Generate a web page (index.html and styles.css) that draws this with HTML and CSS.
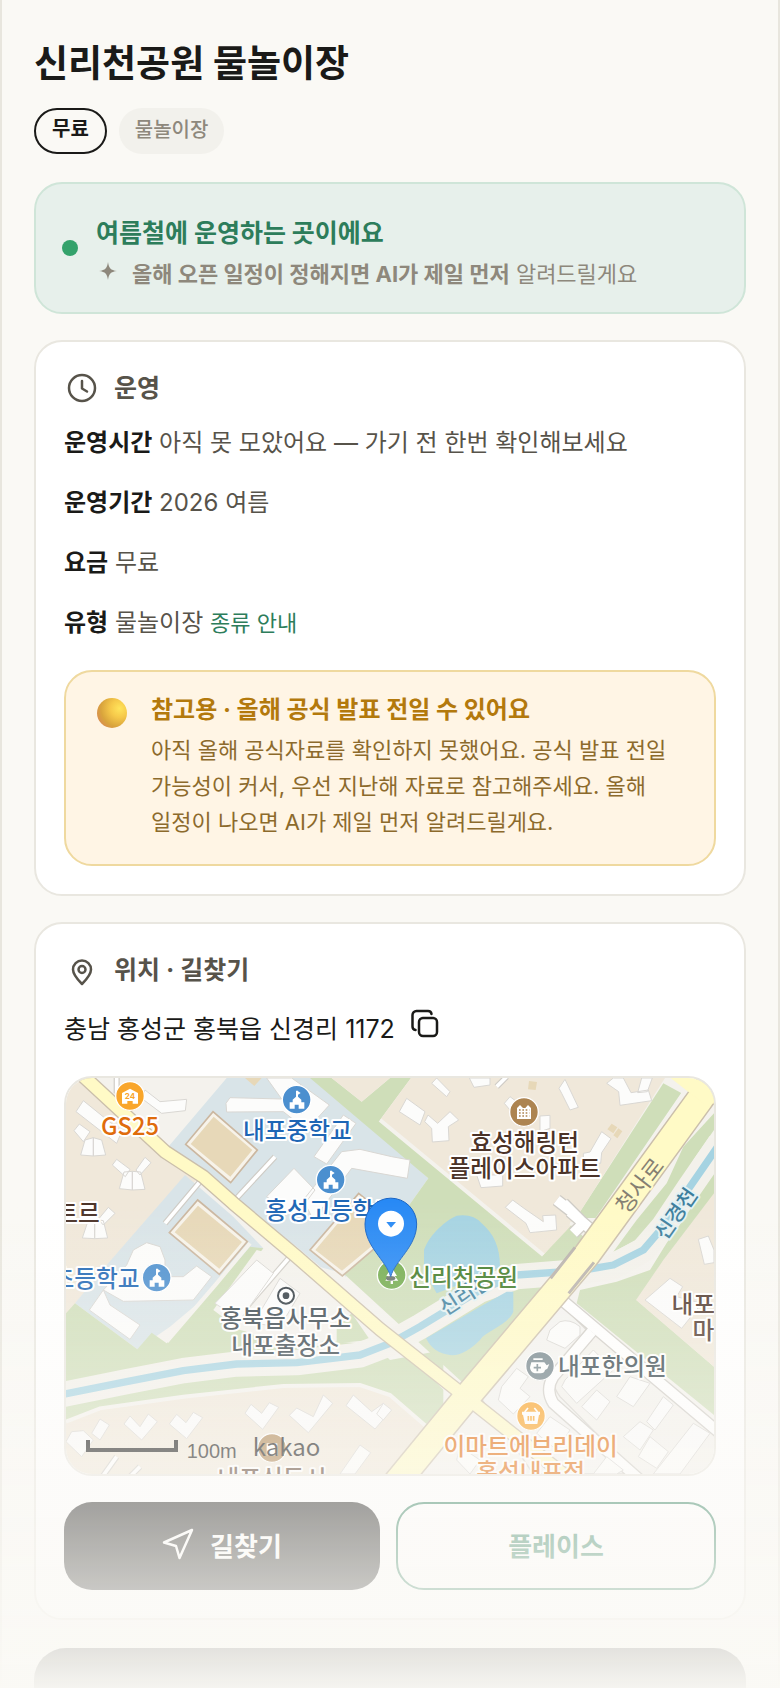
FILE: index.html
```html
<!DOCTYPE html>
<html lang="ko">
<head>
<meta charset="utf-8">
<meta name="viewport" content="width=device-width, initial-scale=1">
<title>신리천공원 물놀이장</title>
<link rel="stylesheet" href="styles.css">
</head>
<body>
<main class="page">
  <header class="place-head">
    <h1 class="place-title">신리천공원 물놀이장</h1>
    <div class="tags">
      <span class="tag tag-free">무료</span>
      <span class="tag tag-kind">물놀이장</span>
    </div>
  </header>

  <section class="status">
    <span class="status-dot"></span>
    <div class="status-body">
      <h2 class="status-title">여름철에 운영하는 곳이에요</h2>
      <p class="status-note">
        <svg class="spark" viewBox="0 0 24 24" aria-hidden="true"><path d="M12 3c.8 6 2.600 8.200 9 9-6.400.8-8.200 3-9 9-.8-6-2.600-8.200-9-9 6.400-.8 8.200-3 9-9z"/></svg>
        <span><b>올해 오픈 일정이 정해지면 AI가 제일 먼저</b> 알려드릴게요</span>
      </p>
    </div>
  </section>

  <section class="card">
    <h2 class="card-title">
      <svg class="icon" viewBox="0 0 36 36" aria-hidden="true"><circle cx="18" cy="18" r="13"/><path d="M18 11v7.500l5 3"/></svg>
      운영
    </h2>
    <div class="facts">
      <p class="fact"><b>운영시간</b> 아직 못 모았어요 — 가기 전 한번 확인해보세요</p>
      <p class="fact"><b>운영기간</b> 2026 여름</p>
      <p class="fact"><b>요금</b> 무료</p>
      <p class="fact"><b>유형</b> 물놀이장 <a class="kind-link" href="#kinds">종류 안내</a></p>
    </div>
    <aside class="notice">
      <span class="ball"></span>
      <div class="notice-body">
        <h3 class="notice-title">참고용 · 올해 공식 발표 전일 수 있어요</h3>
        <p class="notice-text">아직 올해 공식자료를 확인하지 못했어요. 공식 발표 전일 가능성이 커서, 우선 지난해 자료로 참고해주세요. 올해 일정이 나오면 AI가 제일 먼저 알려드릴게요.</p>
      </div>
    </aside>
  </section>

  <section class="card card-place">
    <h2 class="card-title">
      <svg class="icon" viewBox="0 0 36 36" aria-hidden="true"><path d="M18 32C12 26 9 22 9 17.500a9 9 0 0 1 18 0C27 22 24 26 18 32z"/><circle cx="18" cy="17.500" r="3.500"/></svg>
      위치 · 길찾기
    </h2>
    <div class="address">
      <span>충남 홍성군 홍북읍 신경리 1172</span>
      <button class="copy" type="button" aria-label="주소 복사">
        <svg viewBox="0 0 32 32" aria-hidden="true"><rect x="10" y="10" width="18" height="18" rx="4"/><path d="M6.500 22A3.500 3.500 0 0 1 3.500 18.500V7a4 4 0 0 1 4-4h11.500a3.500 3.500 0 0 1 3.500 3"/></svg>
      </button>
    </div>

    <svg class="map" viewBox="48 54 1944 1188" preserveAspectRatio="xMidYMid slice" role="img" aria-label="신리천공원 주변 지도">
      <rect class="ground" x="0" y="0" width="2100" height="1300"/>
      <g class="beige">
        <path d="M48 54H90L350 290 440 360 170 615 48 765z"/>
      </g>
      <g class="school">
        <path d="M530 54H790L1020 250 1135 355 1060 460 870 670 740 560 550 420 450 350 355 260z"/>
        <path d="M405 345L170 615 75 730 262 868 360 800 640 565 550 470z"/>
      </g>
      <g class="green">
        <path d="M780 54H845L935 125 1020 54H1083L990 180 1480 585 1560 490 1610 540 1480 700 1240 970 880 640 1060 460 1135 355z"/>
        <path d="M48 760L75 730 262 868 305 818 350 850 600 560 640 565 500 750 560 800 660 850 800 860 860 800 960 840 1020 900 1180 870 1180 1100 48 1100z"/>
        <path d="M1840 70L1895 100 1640 475 1600 475 1590 455z"/>
        <path d="M1992 160L1992 210 1930 300 1860 430 1780 530 1690 575 1760 480 1850 370 1900 260z"/>
        <path d="M1992 340L1992 470 1760 720 1992 920V1065L1580 730 1590 690 1700 665 1800 630 1880 500z"/>
        <path d="M240 1010L660 950 990 930 930 1100 100 1100z"/>
      </g>
      <g class="beige">
        <path d="M845 54H1020L935 125z"/>
        <path d="M1083 54H1845L1600 440 1560 500 1480 585 990 180z"/>
        <path d="M1992 400V920L1758 720 1840 600z"/>
        <path d="M48 1085L150 1045 400 1010 700 978 930 975 1020 1005 1130 1100 1180 1100 1040 1242H48z"/>
      </g>
      <path class="ground" d="M880 640L620 570 490 750 570 810 650 830 930 850 1000 830z"/>
      <path class="green" d="M860 800L905 760 960 840 860 850z"/>
      <path class="verge" d="M48 1085L150 1045 400 1010 700 978 930 975 1020 1005 1130 1100"/>
      <path class="verge" d="M350 845L500 670 600 550M1480 585L990 180M1160 960L1210 1010 1130 1100"/>
      <path class="verge" d="M1640 520L1600 500 1560 490M1900 100L1640 480H1590"/>

      <path class="bank" d="M30 1005L230 965 400 932 560 912 740 908 930 885 1020 850 1110 800 1290 690 1400 650 1590 635 1690 620 1780 570 1840 500 1920 380 2010 250"/>
      <path class="pond" d="M1122 630V570C1140 520 1190 480 1220 467Q1270 460 1295 490C1330 520 1350 560 1350 620L1290 650 1160 700z"/>
      <path class="pond" d="M1128 835L1290 740 1370 695H1390V755C1370 800 1310 810 1290 840Q1240 890 1200 885 1150 880 1128 835z"/>
      <path class="stream" d="M30 1005L230 965 400 932 560 912 740 908 930 885 1020 850 1110 800 1290 690 1400 645 1590 632 1690 615 1780 570 1840 500 1920 380 2010 250"/>

      <g class="block">
        <path d="M1515 740Q1530 735 1545 745L1610 810 1540 910Q1490 960 1530 1010L1760 1242H1450L1290 1010z"/>
      </g>
      <path class="street-edge" d="M1530 715L2010 1120M1625 815L1510 950Q1485 990 1510 1030L1770 1260M1540 430L1600 490 1570 520M1520 420L1565 455M1560 455L1630 515"/>
      <path class="street" d="M1530 715L2010 1120M1625 815L1510 950Q1485 990 1510 1030L1770 1260M1540 430L1600 490 1570 520M1520 420L1565 455M1560 455L1630 515"/>
      <path class="lane-edge" d="M200 40V100M675 290L550 425M450 365L345 490M720 590L590 740M1340 80L1370 50M200 1190L150 1260M270 1220L230 1260"/>
      <path class="lane" d="M200 40V100M675 290L550 425M450 365L345 490M720 590L590 740M1340 80L1370 50M200 1190L150 1260M270 1220L230 1260"/>

      <path class="road-edge minor" d="M80 30L345 275 460 350 550 430 740 590 990 808 1240 1005 1600 1290"/>
      <path class="road-edge major" d="M2010 30L1947 122 1610 585 1260 1000 1030 1280"/>
      <path class="road minor" d="M80 30L345 275 460 350 550 430 740 590 990 808 1240 1005 1600 1290"/>
      <path class="road major" d="M2010 30L1947 122 1610 585 1260 1000 1030 1280"/>
      <path class="road" d="M1845 40H2000V130L1960 130 1915 95z"/>
      <path class="bridge" d="M1575 562L1502 655M1632 607L1556 700"/>

      <g class="field">
        <path class="field-edge" d="M489 155L622 270 542 368 407 253z"/><path d="M491 170L607 270 541 350 422 252z"/>
        <path class="field-edge" d="M443 420L592 545 508 643 358 518z"/><path d="M444 437L576 546 508 626 374 517z"/>
        <path class="field-edge" d="M926 400L1050 500 877 648 780 570z"/><path d="M926 416L1035 500 876 632 796 570z"/>
        <path d="M585 54H635L613 78zM1437 63L1461 66 1457 90 1434 88zM1685 191L1702 202 1690 220 1672 208zM1705 205L1717 214 1702 235 1690 226z"/>
      </g>

      <g class="building">
        <path d="M100 122L215 215 200 250 78 155zM285 90L330 125 410 118 406 152 335 160 275 115zM88 192L120 215 100 245 72 212z"/>
        <path d="M105 240L130 233V288L92 285zM130 233L155 240 167 285 130 288zM200 298L240 328 226 350 187 315zM285 292L303 308 270 345 258 330zM222 336L247 334V390L208 386zM247 334L272 336 285 388 247 390z"/>
        <path d="M175 442L195 460 160 495 145 478zM115 480L134 478V536L97 534zM134 478L160 482 173 534 134 536z"/>
        <path d="M540 113L695 117 650 54H725L838 135 770 210 700 155 530 156 528 130zM880 165L918 190 830 312 792 290zM732 325L795 390 735 470 650 410zM875 275L930 268 1025 290 1080 300 1072 355 905 325 790 480 760 420z"/>
        <path d="M230 615L250 570 290 548 330 560 345 600V650H400L440 618 485 650 430 720 220 724 160 690zM160 690L180 735 270 795 240 838 118 750z"/>
        <path d="M620 600L670 640 570 780 495 730zM690 655L750 700 690 800 610 790z"/>
        <path d="M1160 54L1200 95 1190 110 1145 70zM1070 115L1125 155 1110 195 1048 155zM1134 165L1163 190 1200 155 1226 180 1195 200 1197 242 1147 246 1145 205 1124 185zM1258 54H1320V75L1272 82zM1380 110L1400 125 1380 150 1363 130zM1545 58L1585 142 1560 150 1535 100 1527 85z"/>
        <path d="M1690 54L1720 54 1743 98 1795 90 1805 122 1710 136 1706 95 1670 70zM1775 54H1807L1792 95 1763 98z"/>
        <path d="M1470 168L1500 166V205L1470 215zM1655 215L1683 236 1655 278 1652 310 1600 305V280L1620 276zM1280 345L1358 345V378L1293 383z"/>
        <path d="M1388 420L1422 445 1480 485 1478 467 1517 465 1520 510 1440 518 1428 490 1366 442zM1945 538L1975 528 1992 570V608L1963 613z"/>
        <path d="M1860 655L1898 680 1880 710 1955 730 1895 805 1785 720z"/>
        <path d="M100 1112L130 1140 95 1190 48 1145 65 1115zM150 1077L178 1095 150 1140 125 1120zM240 1068L270 1100 295 1062 322 1085 275 1140 222 1092zM380 1063L408 1088 430 1057 458 1073 410 1136 358 1092zM603 1033L635 1060 658 1028 686 1042 638 1108 585 1060zM740 1044L790 1070 820 1005 848 1030 775 1118 718 1066zM910 1005L965 1055 1000 1030 1020 1055 975 1107 888 1037zM930 1155L962 1178 915 1242H870z"/>
        <path d="M1000 1030L1025 1050 1000 1080 980 1062zM1230 1160L1290 1200 1260 1242 1220 1200z"/>
        <path d="M1500 810L1530 785Q1560 775 1590 800V825L1545 865 1490 840zM1400 925L1435 950 1410 985 1440 1010 1390 1062 1345 1020 1355 980zM1545 960L1630 870 1690 930 1580 1030 1535 980zM1640 990L1680 1025 1640 1080 1595 1040zM1740 950L1800 970 1750 1040 1700 1010zM1790 1085L1840 1010 1870 1035 1815 1110zM1930 1090L1980 1120 1890 1242H1810zM1800 1130L1855 1175 1820 1225 1765 1190zM1770 1085L1810 1110 1770 1170 1720 1130zM1500 1070L1560 1110 1520 1170 1460 1120zM1670 1190L1720 1230 1700 1242H1630z"/>
      </g>

      <g class="poi">
        <circle cx="240" cy="108" r="43" fill="#f9a62b"/>
        <circle cx="740" cy="119" r="43" fill="#4b8fcf"/>
        <circle cx="842" cy="359" r="43" fill="#4b8fcf"/>
        <circle cx="320" cy="653" r="43" fill="#4b8fcf"/>
        <circle cx="1422" cy="156" r="43" fill="#ad8450"/>
        <circle cx="1025" cy="645" r="43" fill="#73ac4e"/>
        <circle cx="1470" cy="918" r="43" fill="#6f8088"/>
        <circle cx="1443" cy="1068" r="43" fill="#faa020"/>
        <circle cx="666" cy="1164" r="43" fill="#ad8450"/>
      </g>
      <g class="glyph">
        <path d="M216 99L240 86 264 99V131H248V123H232V131H216z"/>
        <path id="school-mark" d="M738 92V110L728 119V127H719V146H734V134H746V146H763V127H754V119L744 110V104L752 99 744 94V92z"/>
        <use href="#school-mark" x="102" y="240"/>
        <use href="#school-mark" x="-420" y="534"/>
        <path d="M1401 144L1410 135 1419 144 1426 144 1434 135 1443 144V177H1401z"/>
        <path d="M1450 895H1478V900H1450zM1444 907H1483L1490 916 1498 912 1492 926 1485 930Q1483 940 1472 940H1454Q1440 936 1440 922z"/>
        <path d="M1416 1055H1470V1064H1467L1462 1092H1425L1419 1064H1416z"/>
        <path d="M1025 622L1041 648H1034L1045 662H1029V672H1022V662H1006L1016 648H1009z"/>
        <path d="M650 1150H682V1186H650z"/>
      </g>
      <path class="basket" d="M1424 1056L1434 1044M1463 1056L1453 1044"/>
      <path class="detail" stroke="#ad8450" d="M1407 150H1438M1407 159H1438M1407 168H1438" stroke-dasharray="5 5"/>
      <path class="detail" stroke="#6f8088" d="M1462 912V934M1451 923H1473"/>
      <path class="detail" stroke="#faa020" d="M1435 1068V1082M1443 1068V1082M1451 1068V1082"/>
      <text class="tiny" x="240" y="117">24</text>
      <circle class="office-ring" cx="708" cy="707" r="24"/><circle cx="708" cy="707" r="10" fill="#2f3940"/>

      <g class="label">
        <text x="240" y="226" fill="#df6c0c">GS25</text>
        <text x="742" y="238" fill="#1d66b5">내포중학교</text>
        <text x="842" y="477" fill="#1d66b5">홍성고등학교</text>
        <text x="138" y="682" fill="#1d66b5">초등학교</text>
        <text x="84" y="487" fill="#4b3328">트르</text>
        <text x="1424" y="273" fill="#4b3328">효성해링턴</text>
        <text x="1424" y="352" fill="#4b3328">플레이스아파트</text>
        <text x="707" y="802" fill="#36434b">홍북읍사무소</text>
        <text x="707" y="882" fill="#36434b">내포출장소</text>
        <text x="1687" y="944" fill="#2f3f47">내포한의원</text>
        <text x="1442" y="1185" fill="#e06703">이마트에브리데이</text>
        <text x="1442" y="1264" fill="#e06703">홍성내포점</text>
        <text x="666" y="1280" fill="#563b29">내포신도시</text>
        <text x="1930" y="758" fill="#4b3328">내포</text>
        <text x="1960" y="838" fill="#4b3328">마</text>
        <text class="on-road" transform="translate(1788 392) rotate(-52)" fill="#857f72">청사로</text>
        <text class="on-water" transform="translate(1896 474) rotate(-55)" fill="#3c7e9d">신경천</text>
        <text class="on-water" transform="translate(1258 722) rotate(-33)" fill="#3c7e9d">신리천</text>
        <text x="1241" y="677" fill="#3f7b28">신리천공원</text>
      </g>

      <ellipse cx="1022" cy="655" rx="14" ry="7" fill="#66706a"/>
      <path class="pin" d="M1022 650C1008 600 945 560 945 492A77 77 0 0 1 1100 492C1100 560 1036 600 1022 650z"/>
      <circle cx="1023" cy="491" r="39" fill="#fff"/>
      <path d="M1009 486H1038L1023 503z" fill="#2789f5"/>

      <path class="scale" d="M114 1140V1170H378V1140"/>
      <text class="scale-text" x="410" y="1193">100m</text>
      <text class="brand" x="608" y="1187">kakao</text>
    </svg>

    <div class="actions">
      <button class="btn btn-go" type="button">
        <svg class="go-icon" viewBox="0 0 32 32" aria-hidden="true"><path d="M30 2L2 14.500l12 3.500L17.500 30z"/></svg>
        길찾기
      </button>
      <button class="btn btn-place" type="button">플레이스</button>
    </div>
  </section>

  <section class="next-card"></section>
  <div class="fade"></div>
</main>
</body>
</html>
```
FILE: styles.css
```css
* { box-sizing: border-box; }

body {
  margin: 0;
  background: #faf9f5;
  color: #1a1a18;
  font-family: Inter, "Noto Sans CJK KR", sans-serif;
  font-size: 25px;
  word-break: keep-all;
}

h1, h2, h3, p { margin: 0; }
b { font-weight: 700; }
button { font: inherit; cursor: pointer; }

.page {
  display: flex;
  flex-direction: column;
  min-height: 100vh;
  padding: 38px 32px 0;
  border: solid #e8e6de;
  border-width: 0 2px;
}

.place-title {
  font-size: 37px;
  font-weight: 700;
  line-height: 52px;
}

.tags {
  display: flex;
  gap: 12px;
  margin: 18px 0 28px;
}

.tag {
  padding: 5px 16px 7px;
  border-radius: 24px;
  font-size: 20px;
  font-weight: 500;
  line-height: 34px;
}

.tag-free {
  padding: 3px 16px 7px;
  border: 2px solid #1a1a18;
  font-weight: 600;
  line-height: 32px;
}

.tag-kind { background: #f2f1ec; color: #8e887c; }

.status {
  display: flex;
  align-items: center;
  gap: 18px;
  padding: 0 26px;
  margin-bottom: 26px;
  border: 2px solid #cfe5d8;
  border-radius: 28px;
  background: #e7f0eb;
}

.status-dot {
  flex: none;
  width: 16px;
  height: 16px;
  border-radius: 50%;
  background: #34a26b;
}

.status-body { padding: 30px 0 20px; }

.status-title {
  margin-bottom: 4px;
  color: #2d7d5b;
  font-size: 25px;
  font-weight: 700;
  line-height: 38px;
}

.status-note {
  display: flex;
  gap: 12px;
  color: #8e887c;
  font-size: 22px;
  line-height: 36px;
}

.spark {
  flex: none;
  width: 24px;
  height: 24px;
  margin-top: 3px;
  fill: currentColor;
}

.card {
  padding: 28px;
  margin-bottom: 26px;
  border: 2px solid #e9e7e0;
  border-radius: 28px;
  background: #fff;
}

.card-place { margin-bottom: 28px; }

.card-title {
  display: flex;
  align-items: center;
  gap: 14px;
  color: #57534a;
  font-size: 25px;
  font-weight: 700;
  line-height: 36px;
}

.icon {
  width: 36px;
  height: 36px;
  fill: none;
  stroke: currentColor;
  stroke-width: 2.5;
  stroke-linecap: round;
  stroke-linejoin: round;
}

.facts {
  display: grid;
  gap: 18px;
  padding: 16px 0 26px;
}

.fact { color: #57534a; font-size: 24px; line-height: 42px; }
.fact b { color: #1a1a18; }
.kind-link { color: #2d7d5b; font-size: 22px; text-decoration: none; }

.notice {
  display: flex;
  gap: 24px;
  padding: 20px 28px 24px 31px;
  border: 2px solid #efd99f;
  border-radius: 28px;
  background: #fff5e5;
}

.ball {
  flex: none;
  width: 30px;
  height: 30px;
  margin-top: 6px;
  border-radius: 50%;
  background: radial-gradient(circle at 75% 35%, #ffe45c 0, #f6c94a 30%, #d9a43c 62%, #d98a52 85%, #d87770 100%);
}

.notice-title {
  margin-bottom: 4px;
  color: #b3790c;
  font-size: 24px;
  font-weight: 700;
  line-height: 36px;
}

.notice-text { color: #8c6a2c; font-size: 22px; line-height: 36px; }

.address {
  display: flex;
  align-items: center;
  gap: 14px;
  padding: 17px 0 23px;
  line-height: 48px;
}

.copy {
  display: flex;
  width: 32px;
  height: 42px;
  padding: 0;
  border: 0;
  background: none;
  color: #1a1a18;
}

.copy svg {
  width: 32px;
  height: 32px;
  fill: none;
  stroke: currentColor;
  stroke-width: 2.5;
  stroke-linecap: round;
}

.map {
  display: block;
  width: 100%;
  height: 400px;
  border: 2px solid #e9e7e0;
  border-radius: 28px;
  font-family: "Noto Sans CJK KR", sans-serif;
}

.ground { fill: #f4f2ed; }
.beige { fill: #f0e8da; }
.school { fill: #d9e4e8; }
.green { fill: #cfdeb9; }
.block { fill: #f4f3f0; stroke: #d6d3cd; stroke-width: 4; }
.verge { fill: none; stroke: #f4f2ed; stroke-width: 12; }
.bank { fill: none; stroke: #f3f1eb; stroke-width: 76; stroke-linejoin: round; }
.stream { fill: none; stroke: #a5d3e2; stroke-width: 22; stroke-linejoin: round; }
.pond { fill: #a5d3e2; }
.street-edge { fill: none; stroke: #cfccc6; stroke-width: 38; }
.street { fill: none; stroke: #fff; stroke-width: 30; }
.lane-edge { fill: none; stroke: #cfccc6; stroke-width: 18; }
.lane { fill: none; stroke: #fff; stroke-width: 11; }
.road-edge { fill: none; stroke: #cbbfab; stroke-linejoin: round; }
.road-edge.minor { stroke-width: 44; }
.road-edge.major { stroke-width: 86; }
.road { fill: #fffac6; stroke: #fffac6; stroke-linejoin: round; }
.road.minor { fill: none; stroke-width: 36; }
.road.major { fill: none; stroke-width: 77; }
.bridge { fill: none; stroke: #b9b2ac; stroke-width: 9; }
.field { fill: #e7d8b8; }
.field-edge { fill: #f7f3ea; stroke: #cbb7a0; stroke-width: 5; }
.building { fill: #fcfcfb; stroke: #d9d7d3; stroke-width: 3; }
.poi { stroke: #fff; stroke-width: 4; }
.glyph { fill: #fff; }
.basket { fill: none; stroke: #fff; stroke-width: 5; }
.detail { fill: none; stroke-width: 5; }
.tiny { fill: #f9a62b; font: 700 24px Inter, sans-serif; text-anchor: middle; }
.office-ring { fill: #fff; stroke: #2f3940; stroke-width: 6; }

.label {
  font-size: 71px;
  font-weight: 500;
  text-anchor: middle;
  stroke: #fff;
  stroke-width: 12;
  stroke-linejoin: round;
  paint-order: stroke;
}

.on-road { font-size: 68px; font-weight: 400; stroke: #fffac6; }
.on-water { font-size: 62px; stroke: #e4f1f3; }
.pin { fill: #2789f5; stroke: #1763c4; stroke-width: 3; }
.scale { fill: none; stroke: #111; stroke-width: 12; }
.scale-text { fill: #111; font: 60px "Liberation Sans", sans-serif; }
.brand { fill: #111; font: 400 72px "Noto Sans CJK KR", sans-serif; }

.actions {
  display: flex;
  gap: 16px;
  padding-top: 26px;
}

.btn {
  display: flex;
  flex: 1 1 0;
  align-items: center;
  justify-content: center;
  gap: 16px;
  height: 88px;
  padding: 0 16px 4px;
  border-radius: 28px;
  font-size: 26px;
  font-weight: 700;
}

.btn-go { border: 0; background: #1a1a18; color: #fff; }
.btn-place { border: 2px solid #2d7d5b; background: #fff; color: #2d7d5b; }

.go-icon {
  width: 32px;
  height: 32px;
  fill: none;
  stroke: currentColor;
  stroke-width: 2.5;
  stroke-linejoin: round;
}

.next-card {
  flex: 1 0 32px;
  border-radius: 32px 32px 0 0;
  background: #1a1a18;
}

.fade {
  position: fixed;
  right: 0;
  bottom: 0;
  left: 0;
  height: 490px;
  background: linear-gradient(rgba(250, 249, 245, 0), rgba(250, 249, 245, .98));
  pointer-events: none;
}
```
